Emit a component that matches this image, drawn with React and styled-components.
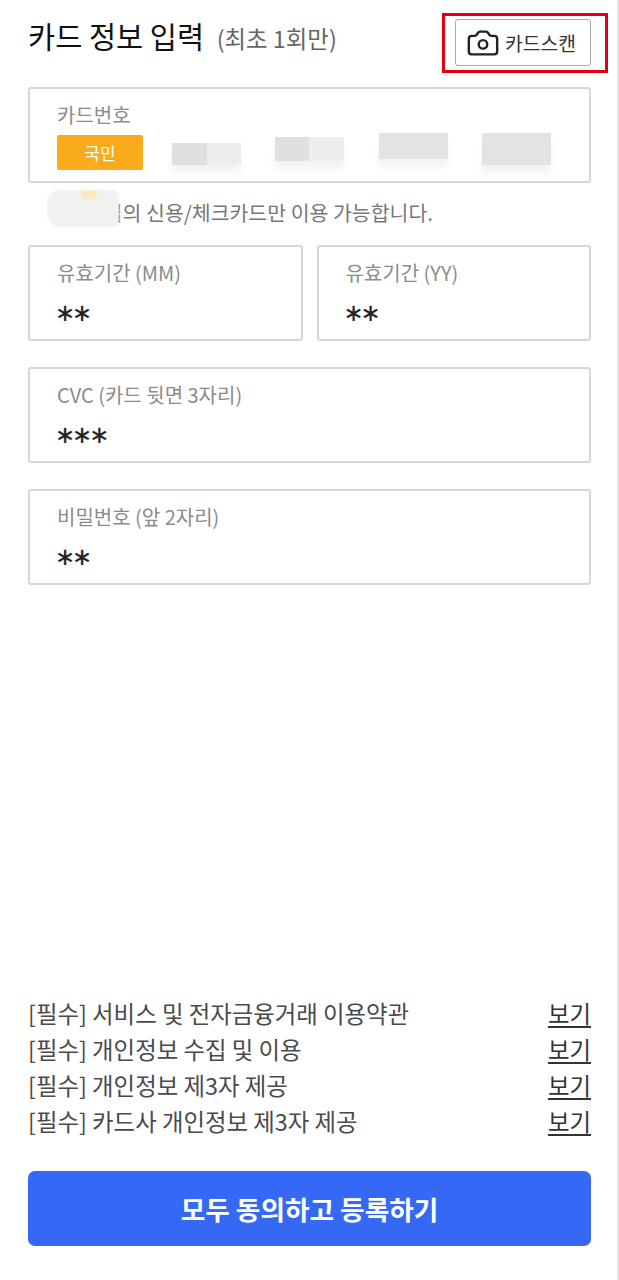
import styled, { createGlobalStyle } from 'styled-components'
import { Camera } from 'lucide-react'

const GlobalStyle = createGlobalStyle`
  html, body { margin: 0; padding: 0; background: #fff; }
  * { box-sizing: border-box; }
  body { font-family: "Noto Sans CJK KR", "Noto Sans", sans-serif; }
`

const Page = styled.main`
  width: 619px;
  height: 1280px;
  display: flex;
  flex-direction: column;
  padding: 19px 26px 34px 28px;
  border-right: 2px solid #e4e4e4;
`

const Header = styled.header`
  display: flex;
  justify-content: space-between;
  align-items: flex-start;
  height: 47px;
  margin-bottom: 21px;
`

const Title = styled.h1`
  margin: -3px 0 0 0;
  font-size: 29.5px;
  line-height: 38px;
  font-weight: 400;
  color: #111;
  white-space: nowrap;
  small {
    font-size: 23.4px;
    font-weight: 400;
    color: #666;
    margin-left: 6px;
  }
`

const ScanWrap = styled.div`
  position: relative;
`

const Highlight = styled.span`
  position: absolute;
  inset: -6px -17px -7px -13px;
  border: 3px solid #e1000f;
  pointer-events: none;
`

const ScanButton = styled.button`
  width: 136px;
  height: 47px;
  display: flex;
  align-items: center;
  gap: 5px;
  padding: 0 0 0 10px;
  background: #fff;
  border: 1px solid #a9a9a9;
  border-radius: 3px;
  font-family: inherit;
  font-size: 19.3px;
  color: #333;
`

const Field = styled.div`
  height: 96px;
  padding: 12px 28px 0 27px;
  border: 2px solid #d6d6d6;
  border-radius: 3px;
  background: #fff;
`

const HalfField = styled(Field)`
  flex: 1;
`

const Label = styled.div`
  font-size: 20px;
  line-height: 28px;
  color: #8b8b8b;
`

const Stars = styled.div`
  margin: 12px 0 0 -2px;
  font-family: "DejaVu Sans", sans-serif;
  font-size: 24px;
  line-height: 28px;
  letter-spacing: -3px;
  color: #222;
  -webkit-text-stroke: 0.2px #222;
`

const NumberRow = styled.div`
  display: flex;
  align-items: flex-start;
  margin-top: 6px;
`

const BankTag = styled.span`
  width: 86px;
  height: 35px;
  display: flex;
  align-items: center;
  justify-content: center;
  background: #f9ab1c;
  border-radius: 2px;
  color: #fff;
  font-size: 17px;
`

const Smudge = styled.span`
  width: 69px;
  height: ${p => p.$h}px;
  margin-left: ${p => p.$gap}px;
  margin-top: ${p => p.$top}px;
  background: ${p => p.$even
    ? '#e3e3e3'
    : 'linear-gradient(90deg, #dfdfdf 0 50%, #eeeeee 50% 100%)'};
  box-shadow: 0 8px 6px rgba(240, 240, 240, 0.8);
`

const Notice = styled.p`
  position: relative;
  margin: 17px 0 20px 0;
  padding-left: 38px;
  font-size: 20.5px;
  line-height: 25px;
  color: #777;
`

const NoticeSmudge = styled.span`
  position: absolute;
  left: 19px;
  top: -10px;
  width: 72px;
  height: 37px;
  background: #f1f1f1;
  border-radius: 14px 6px 6px 14px;
  filter: blur(1px);
  &::after {
    content: '';
    position: absolute;
    left: 34px;
    top: 0;
    width: 16px;
    height: 9px;
    background: #fae9bf;
    border-radius: 4px;
  }
`

const Row = styled.div`
  display: flex;
  gap: 14px;
  margin-bottom: 26px;
`

const Terms = styled.ul`
  list-style: none;
  margin: auto 0 32px 0;
  padding: 0;
`

const Term = styled.li`
  display: flex;
  justify-content: space-between;
  align-items: center;
  height: 36px;
  font-size: 23.4px;
  color: #4a4a4a;
`

const ViewLink = styled.a`
  color: #333;
  text-decoration: underline;
  text-underline-offset: 3px;
`

const SubmitButton = styled.button`
  width: 100%;
  height: 75px;
  flex-shrink: 0;
  border: 0;
  border-radius: 7px;
  background: #3568f5;
  color: #fff;
  font-family: inherit;
  font-size: 26.7px;
  font-weight: 700;
`

const terms = [
  '서비스 및 전자금융거래 이용약관',
  '개인정보 수집 및 이용',
  '개인정보 제3자 제공',
  '카드사 개인정보 제3자 제공',
]

export default function App() {
  return (
    <Page>
      <GlobalStyle />
      <Header>
        <Title>카드 정보 입력 <small>(최초 1회만)</small></Title>
        <ScanWrap>
          <ScanButton><Camera size={34} strokeWidth={1.7} color="#222" />카드스캔</ScanButton>
          <Highlight />
        </ScanWrap>
      </Header>

      <Field>
        <Label>카드번호</Label>
        <NumberRow>
          <BankTag>국민</BankTag>
          <Smudge $gap={29} $top={8} $h={22} />
          <Smudge $gap={34} $top={2} $h={24} />
          <Smudge $gap={35} $top={-2} $h={26} $even />
          <Smudge $gap={34} $top={-2} $h={32} $even />
        </NumberRow>
      </Field>

      <Notice>회원님의 신용/체크카드만 이용 가능합니다.<NoticeSmudge /></Notice>

      <Row>
        <HalfField><Label>유효기간 (MM)</Label><Stars>∗∗</Stars></HalfField>
        <HalfField><Label>유효기간 (YY)</Label><Stars>∗∗</Stars></HalfField>
      </Row>
      <Row>
        <HalfField><Label>CVC (카드 뒷면 3자리)</Label><Stars>∗∗∗</Stars></HalfField>
      </Row>
      <Row>
        <HalfField><Label>비밀번호 (앞 2자리)</Label><Stars>∗∗</Stars></HalfField>
      </Row>

      <Terms>
        {terms.map(t => (
          <Term key={t}><span>[필수] {t}</span><ViewLink>보기</ViewLink></Term>
        ))}
      </Terms>
      <SubmitButton>모두 동의하고 등록하기</SubmitButton>
    </Page>
  )
}
